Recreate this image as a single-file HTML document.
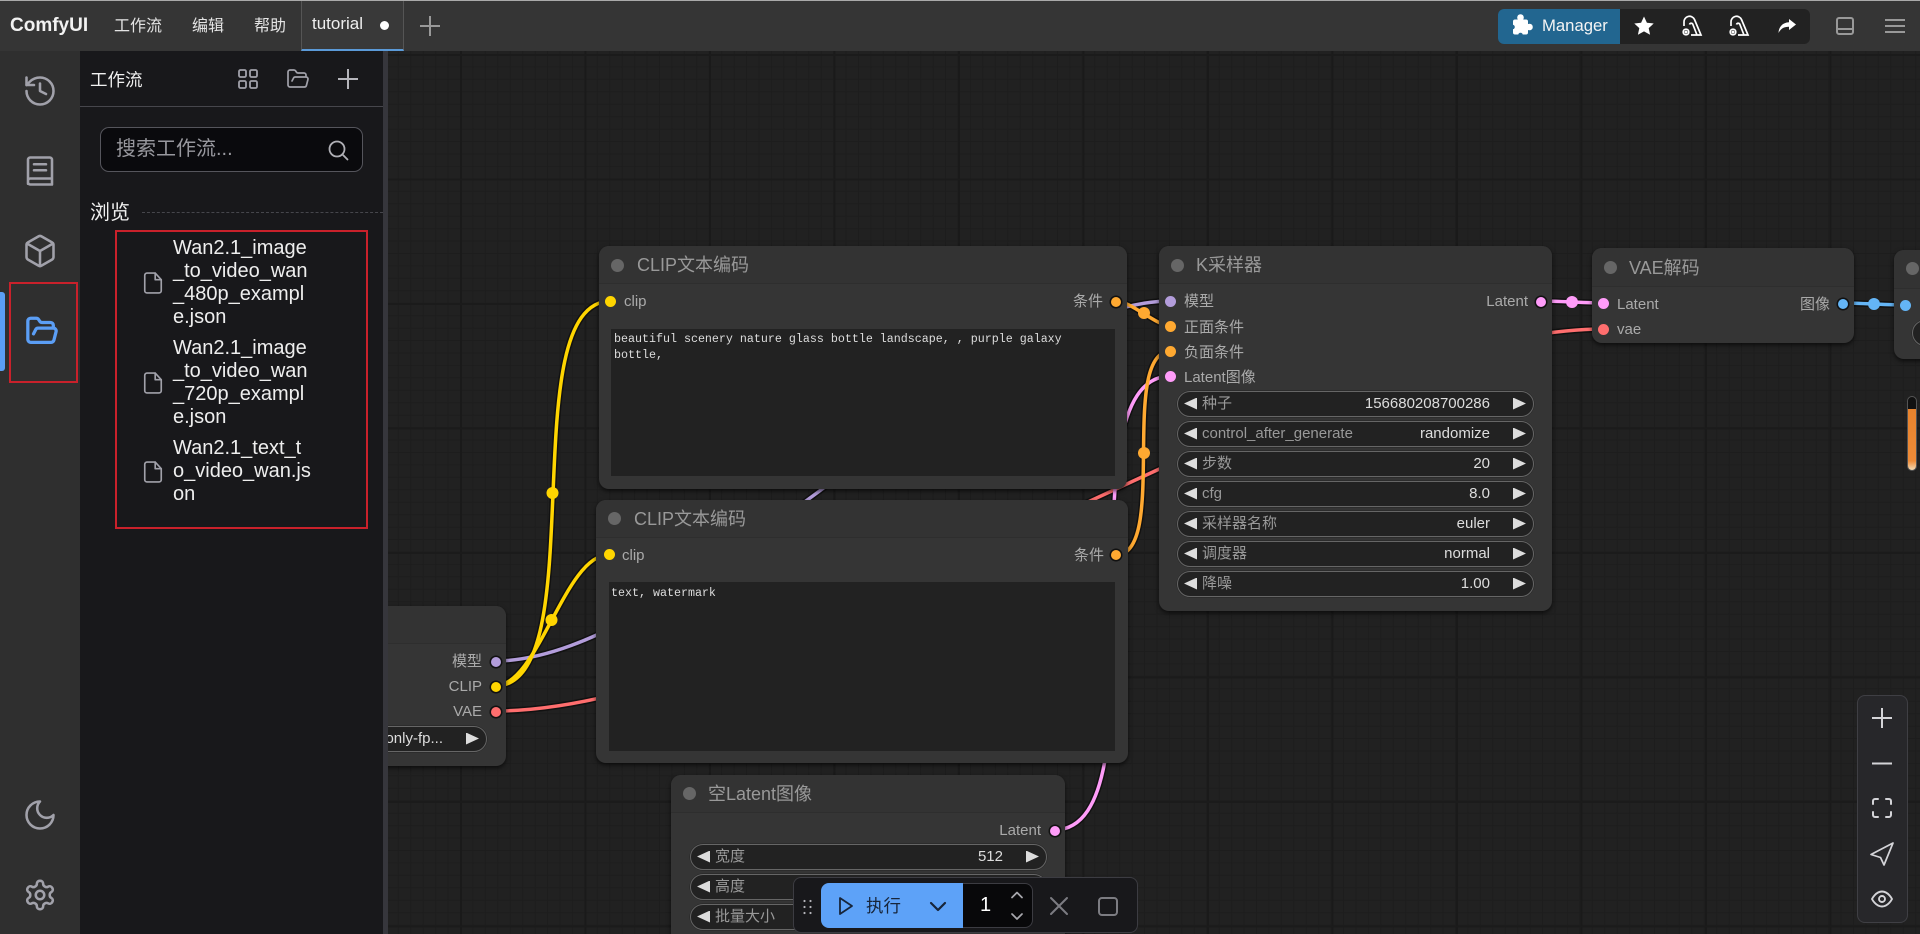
<!DOCTYPE html>
<html><head><meta charset="utf-8"><title>ComfyUI</title>
<style>
*{box-sizing:border-box}
html,body{margin:0;padding:0;width:1920px;height:934px;overflow:hidden;background:#212121}
body{position:relative;font-family:"Liberation Sans","Noto Sans CJK SC",sans-serif;color:#ddd}
.a{position:absolute}
.t{position:absolute;white-space:nowrap;height:20px;line-height:20px}
#canvas{position:absolute;left:388px;top:51px;width:1532px;height:883px;background-color:#212121;
background-image:linear-gradient(#1b1b1b 2px,transparent 2px),linear-gradient(90deg,#1a1a1a 2px,transparent 2px),linear-gradient(#1d1d1d 1px,transparent 1px),linear-gradient(90deg,#1d1d1d 1px,transparent 1px);
background-size:124.5px 124.5px,124.5px 124.5px,12.45px 12.45px,12.45px 12.45px;
background-position:72px 3px,72px 3px,72px 3px,72px 3px}
.node{position:absolute;background:#353535;border-radius:10px;box-shadow:0 2px 5px rgba(0,0,0,.65)}
.hd{position:absolute;left:0;right:0;top:0;background:#333;border-radius:10px 10px 0 0;border-bottom:1px solid #2e2e2e}
.tdot{position:absolute;width:13px;height:13px;border-radius:50%;background:#666}
.tt{position:absolute;white-space:nowrap;font-size:18px;color:#999;height:24px;line-height:24px}
.s{position:absolute;width:10px;height:10px;border-radius:50%;box-shadow:0 0 0 1.5px #111;margin:.5px}
.s2{width:11px;height:11px;box-shadow:none;margin:0}
.lb{position:absolute;white-space:nowrap;font-size:15px;color:#aaa;height:20px;line-height:20px}
.ta{position:absolute;background:#222;color:#ddd;font:11.67px/15.5px "Liberation Mono","Noto Sans CJK SC",monospace;padding:3px;white-space:pre}
.w{position:absolute;height:26px;background:#222;border:1.7px solid #666;border-radius:13px;box-shadow:0 0 0 .5px #222;font-size:15px}
.w .k{position:absolute;left:24px;top:2px;line-height:20px;color:#999;white-space:nowrap}
.w .v{position:absolute;right:43px;top:2px;line-height:20px;color:#ddd;white-space:nowrap}
.w .l,.w .r{position:absolute;top:5.5px;width:13px;height:12px;background:#ddd}
.w .l{left:6px;clip-path:polygon(0 50%,100% 0,100% 100%)}
.w .r{right:7px;clip-path:polygon(0 0,100% 50%,0 100%)}
svg{position:absolute;overflow:visible}
.ic{fill:none;stroke:#a1a1aa;stroke-width:1.7;stroke-linecap:round;stroke-linejoin:round}
.file{position:absolute;left:173px;font-size:20px;line-height:23px;color:#eee;white-space:pre}
</style></head>
<body>
<div id="canvas"></div>

<!-- wires -->
<svg style="left:0;top:0" width="1920" height="934" fill="none" stroke-linecap="round">
<g stroke="#111" stroke-width="6.5">
<path d="M495 661C686 661 980 301 1171 301"/>
<path d="M495 711C788 711 1311 329 1604 329"/>
<path d="M1054 830C1171 830 1054 376 1171 376"/>
<path d="M495 686C595 686 511 301 611 301"/>
<path d="M495 686C538 686 565 555 608 555"/>
<path d="M1116 301C1131 301 1156 326 1171 326"/>
<path d="M1116 555C1169 555 1118 351 1171 351"/>
<path d="M1541 301C1556 301 1589 303 1604 303"/>
<path d="M1842 303C1858 303 1890 305 1906 305"/>
</g>
<path d="M495 661C686 661 980 301 1171 301" stroke="#b39ddb" stroke-width="3.5"/>
<path d="M495 711C788 711 1311 329 1604 329" stroke="#ff6e6e" stroke-width="3.5"/>
<path d="M1054 830C1171 830 1054 376 1171 376" stroke="#ff9cf9" stroke-width="3.5"/>
<path d="M495 686C595 686 511 301 611 301" stroke="#ffd500" stroke-width="3.5"/>
<path d="M495 686C538 686 565 555 608 555" stroke="#ffd500" stroke-width="3.5"/>
<path d="M1116 301C1131 301 1156 326 1171 326" stroke="#ffa931" stroke-width="3.5"/>
<path d="M1116 555C1169 555 1118 351 1171 351" stroke="#ffa931" stroke-width="3.5"/>
<path d="M1541 301C1556 301 1589 303 1604 303" stroke="#ff9cf9" stroke-width="3.5"/>
<path d="M1842 303C1858 303 1890 305 1906 305" stroke="#64b5f6" stroke-width="3.5"/>
<circle cx="552.5" cy="493" r="6" fill="#ffd500"/>
<circle cx="551.5" cy="620" r="6" fill="#ffd500"/>
<circle cx="1144" cy="313" r="6" fill="#ffa931"/>
<circle cx="1144" cy="453" r="6" fill="#ffa931"/>
<circle cx="1572" cy="302" r="6" fill="#ff9cf9"/>
<circle cx="1874" cy="304" r="6" fill="#64b5f6"/>
</svg>

<!-- left loader node -->
<div class="node" style="left:300px;top:606px;width:206px;height:160px">
<div class="hd" style="height:38px"></div>
<div class="lb" style="right:24px;top:46px">模型</div><div class="s" style="left:190px;top:50px;background:#b39ddb"></div>
<div class="lb" style="right:24px;top:71px">CLIP</div><div class="s" style="left:190px;top:75px;background:#ffd500"></div>
<div class="lb" style="right:24px;top:96px">VAE</div><div class="s" style="left:190px;top:100px;background:#ff6e6e"></div>
<div class="w" style="left:-10px;top:120px;width:197px"><span class="v">only-fp...</span><i class="r"></i></div>
</div>

<!-- CLIP 1 -->
<div class="node" style="left:599px;top:246px;width:528px;height:243px">
<div class="hd" style="height:38px"></div>
<div class="tdot" style="left:12px;top:13px"></div>
<div class="tt" style="left:38px;top:7px">CLIP文本编码</div>
<div class="s s2" style="left:6px;top:50px;background:#ffd500"></div>
<div class="lb" style="left:25px;top:46px">clip</div>
<div class="lb" style="right:24px;top:46px">条件</div>
<div class="s" style="left:511px;top:50px;background:#ffa931"></div>
<div class="ta" style="left:12px;top:83px;width:504px;height:147px">beautiful scenery nature glass bottle landscape, , purple galaxy
bottle,</div>
</div>

<!-- CLIP 2 -->
<div class="node" style="left:596px;top:500px;width:532px;height:263px">
<div class="hd" style="height:38px"></div>
<div class="tdot" style="left:12px;top:12px"></div>
<div class="tt" style="left:38px;top:7px">CLIP文本编码</div>
<div class="s s2" style="left:8px;top:49px;background:#ffd500"></div>
<div class="lb" style="left:26px;top:46px">clip</div>
<div class="lb" style="right:24px;top:46px">条件</div>
<div class="s" style="left:514px;top:49px;background:#ffa931"></div>
<div class="ta" style="left:13px;top:82px;width:506px;height:169px;padding:4px 2px">text, watermark</div>
</div>

<!-- K sampler -->
<div class="node" style="left:1159px;top:246px;width:393px;height:365px">
<div class="hd" style="height:38px"></div>
<div class="tdot" style="left:12px;top:13px"></div>
<div class="tt" style="left:37px;top:7px">K采样器</div>
<div class="s s2" style="left:6px;top:50px;background:#b39ddb"></div><div class="lb" style="left:25px;top:46px">模型</div>
<div class="s s2" style="left:6px;top:75px;background:#ffa931"></div><div class="lb" style="left:25px;top:72px">正面条件</div>
<div class="s s2" style="left:6px;top:100px;background:#ffa931"></div><div class="lb" style="left:25px;top:97px">负面条件</div>
<div class="s s2" style="left:6px;top:125px;background:#ff9cf9"></div><div class="lb" style="left:25px;top:122px">Latent图像</div>
<div class="lb" style="right:24px;top:46px">Latent</div><div class="s" style="left:376px;top:50px;background:#ff9cf9"></div>
<div class="w" style="left:18px;top:145px;width:357px"><i class="l"></i><span class="k">种子</span><span class="v">156680208700286</span><i class="r"></i></div>
<div class="w" style="left:18px;top:175px;width:357px"><i class="l"></i><span class="k">control_after_generate</span><span class="v">randomize</span><i class="r"></i></div>
<div class="w" style="left:18px;top:205px;width:357px"><i class="l"></i><span class="k">步数</span><span class="v">20</span><i class="r"></i></div>
<div class="w" style="left:18px;top:235px;width:357px"><i class="l"></i><span class="k">cfg</span><span class="v">8.0</span><i class="r"></i></div>
<div class="w" style="left:18px;top:265px;width:357px"><i class="l"></i><span class="k">采样器名称</span><span class="v">euler</span><i class="r"></i></div>
<div class="w" style="left:18px;top:295px;width:357px"><i class="l"></i><span class="k">调度器</span><span class="v">normal</span><i class="r"></i></div>
<div class="w" style="left:18px;top:325px;width:357px"><i class="l"></i><span class="k">降噪</span><span class="v">1.00</span><i class="r"></i></div>
</div>

<!-- VAE decode -->
<div class="node" style="left:1592px;top:248px;width:262px;height:95px">
<div class="hd" style="height:39px"></div>
<div class="tdot" style="left:12px;top:13px"></div>
<div class="tt" style="left:37px;top:8px">VAE解码</div>
<div class="s s2" style="left:6px;top:50px;background:#ff9cf9"></div><div class="lb" style="left:25px;top:47px">Latent</div>
<div class="s s2" style="left:6px;top:76px;background:#ff6e6e"></div><div class="lb" style="left:25px;top:72px">vae</div>
<div class="lb" style="right:24px;top:47px">图像</div><div class="s" style="left:245px;top:50px;background:#64b5f6"></div>
</div>

<!-- Save image node (cut off) -->
<div class="node" style="left:1894px;top:250px;width:60px;height:109px">
<div class="hd" style="height:39px"></div>
<div class="tdot" style="left:12px;top:12px"></div>
<div class="s s2" style="left:6px;top:50px;background:#64b5f6"></div>
<div class="w" style="left:18px;top:70px;width:40px"></div>
</div>
<div class="a" style="left:1907px;top:396px;width:10px;height:75px;border-radius:5px;background:#111;border:1px solid #555"></div>
<div class="a" style="left:1908px;top:409px;width:8px;height:61px;border-radius:0 0 4px 4px;background:linear-gradient(#e8832d 0,#ee8b38 85%,#f3dcb8 100%)"></div>

<!-- Empty latent -->
<div class="node" style="left:671px;top:775px;width:394px;height:170px">
<div class="hd" style="height:38px"></div>
<div class="tdot" style="left:12px;top:12px"></div>
<div class="tt" style="left:37px;top:7px">空Latent图像</div>
<div class="lb" style="right:24px;top:46px">Latent</div><div class="s" style="left:378px;top:50px;background:#ff9cf9"></div>
<div class="w" style="left:19px;top:69px;width:357px"><i class="l"></i><span class="k">宽度</span><span class="v">512</span><i class="r"></i></div>
<div class="w" style="left:19px;top:99px;width:357px"><i class="l"></i><span class="k">高度</span></div>
<div class="w" style="left:19px;top:129px;width:357px"><i class="l"></i><span class="k">批量大小</span></div>
</div>

<!-- top bar -->
<div class="a" style="left:0;top:0;width:1920px;height:51px;background:#353535"></div>
<div class="a" style="left:0;top:0;width:1920px;height:1px;background:#aaa"></div>
<div class="t" style="left:10px;top:16px;font-size:19px;font-weight:bold;color:#f2f2f2">ComfyUI</div>
<div class="t" style="left:114px;top:17px;font-size:16px;color:#e4e4e4">工作流</div>
<div class="t" style="left:192px;top:17px;font-size:16px;color:#e4e4e4">编辑</div>
<div class="t" style="left:254px;top:17px;font-size:16px;color:#e4e4e4">帮助</div>
<div class="a" style="left:301px;top:1px;width:103px;height:50px;background:#393939;border-left:1px solid #555;border-right:1px solid #555;border-bottom:2px solid #5b9ad8"></div>
<div class="t" style="left:312px;top:14px;font-size:17px;color:#eee">tutorial</div>
<div class="a" style="left:380px;top:21px;width:9px;height:9px;border-radius:50%;background:#fff"></div>
<svg style="left:420px;top:16px" width="20" height="20" fill="none" stroke="#999" stroke-width="2"><path d="M10 0v20M0 10h20"/></svg>

<div class="a" style="left:1498px;top:9px;width:312px;height:35px;background:#222;border-radius:6px"></div>
<div class="a" style="left:1498px;top:9px;width:122px;height:35px;background:#226690;border-radius:6px 0 0 6px"></div>
<svg style="left:1512px;top:14px" width="21" height="21" viewBox="0 0 21 21" fill="#fff"><rect x="1" y="5.500" width="15" height="15" rx="2"/><circle cx="8.500" cy="3.500" r="3.300"/><circle cx="17.500" cy="13" r="3.300"/><circle cx="0.500" cy="13" r="2.300" fill="#226690"/><circle cx="8.500" cy="21" r="2.300" fill="#226690"/></svg>
<div class="t" style="left:1542px;top:16px;font-size:16.7px;color:#f4f4f4">Manager</div>
<svg style="left:1634px;top:16px" width="20" height="20" viewBox="0 0 20 20"><path fill="#fff" d="M10 .5l2.900 6.200 6.800.8-5 4.600 1.400 6.700L10 15.400l-6.100 3.400 1.400-6.700-5-4.600 6.800-.8z"/></svg>
<svg style="left:1682px;top:15px" width="21" height="21" viewBox="0 0 21 21" fill="none" stroke="#fff" stroke-width="1.700"><path d="M2 11V7a5.500 5.500 0 0 1 10.500-2.500L19 20H9"/><path d="M7.500 9.500a1.800 1.800 0 0 1 3.200-.5L15 20"/><circle cx="4" cy="17" r="2.800"/><circle cx="4" cy="17" r=".7" fill="#fff"/></svg>
<svg style="left:1729px;top:15px" width="21" height="21" viewBox="0 0 21 21" fill="none" stroke="#fff" stroke-width="1.700"><path d="M2 11V7a5.500 5.500 0 0 1 10.500-2.500L19 20H9"/><path d="M7.500 9.500a1.800 1.800 0 0 1 3.200-.5L15 20"/><circle cx="4" cy="17" r="2.800"/><circle cx="4" cy="17" r=".7" fill="#fff"/></svg>
<svg style="left:1778px;top:19px" width="18" height="14" viewBox="0 0 18 14"><path fill="#fff" d="M11 0l7 5.500-7 5.500V7.800C6 7.800 3 9.500 .5 14 .8 8 4.500 3.600 11 3.300z"/></svg>
<svg style="left:1836px;top:17px" width="18" height="18" fill="none" stroke="#999" stroke-width="2"><rect x="1" y="1" width="16" height="16" rx="2"/><path d="M1 12h16"/></svg>
<svg style="left:1885px;top:19px" width="20" height="14" fill="none" stroke="#999" stroke-width="2"><path d="M0 1h20M0 7h20M0 13h20"/></svg>

<!-- icon strip -->
<div class="a" style="left:0;top:51px;width:80px;height:883px;background:#2f2f2f"></div>
<svg class="ic" style="left:22px;top:73px" width="36" height="36" viewBox="0 0 24 24"><path d="M3 12a9 9 0 1 0 9-9 9.750 9.750 0 0 0-6.740 2.740L3 8"/><path d="M3 3v5h5"/><path d="M12 7v5l4 2"/></svg>
<svg class="ic" style="left:22px;top:153px" width="36" height="36" viewBox="0 0 24 24"><path d="M4 20.500V4.500A1.500 1.500 0 0 1 5.500 3h13A1.500 1.500 0 0 1 20 4.500v16.500H5.500A1.500 1.500 0 0 1 4 19.500V18.500A1.500 1.500 0 0 1 5.500 17H20"/><path d="M8 7.500h8M8 11.500h8"/></svg>
<svg class="ic" style="left:22px;top:233px" width="36" height="36" viewBox="0 0 24 24"><path d="M21 8a2 2 0 0 0-1-1.730l-7-4a2 2 0 0 0-2 0l-7 4A2 2 0 0 0 3 8v8a2 2 0 0 0 1 1.730l7 4a2 2 0 0 0 2 0l7-4A2 2 0 0 0 21 16Z"/><path d="m3.300 7 8.700 5 8.700-5"/><path d="M12 22V12"/></svg>
<div class="a" style="left:0;top:292px;width:5px;height:79px;background:#5b9ef5;border-radius:0 3px 3px 0"></div>
<svg class="ic" style="left:25px;top:314px;stroke:#5b9ef5;stroke-width:2.300" width="34" height="34" viewBox="0 0 24 24"><path d="m6 14 1.500-2.900A2 2 0 0 1 9.240 10H20a2 2 0 0 1 1.940 2.500l-1.540 6a2 2 0 0 1-1.950 1.500H4a2 2 0 0 1-2-2V5a2 2 0 0 1 2-2h3.900a2 2 0 0 1 1.690.9l.81 1.200a2 2 0 0 0 1.670.9H18a2 2 0 0 1 2 2v2"/></svg>
<svg class="ic" style="left:22px;top:797px" width="36" height="36" viewBox="0 0 24 24"><path d="M12 3a6 6 0 0 0 9 9 9 9 0 1 1-9-9Z"/></svg>
<svg class="ic" style="left:23px;top:878px;stroke-width:1.800" width="34" height="34" viewBox="0 0 24 24"><path d="M12.220 2h-.44a2 2 0 0 0-2 2v.18a2 2 0 0 1-1 1.730l-.43.25a2 2 0 0 1-2 0l-.15-.08a2 2 0 0 0-2.730.73l-.22.38a2 2 0 0 0 .73 2.730l.15.1a2 2 0 0 1 1 1.720v.51a2 2 0 0 1-1 1.740l-.15.09a2 2 0 0 0-.73 2.730l.22.38a2 2 0 0 0 2.730.73l.15-.08a2 2 0 0 1 2 0l.43.25a2 2 0 0 1 1 1.730V20a2 2 0 0 0 2 2h.44a2 2 0 0 0 2-2v-.18a2 2 0 0 1 1-1.730l.43-.25a2 2 0 0 1 2 0l.15.08a2 2 0 0 0 2.730-.73l.22-.39a2 2 0 0 0-.73-2.730l-.15-.08a2 2 0 0 1-1-1.740v-.5a2 2 0 0 1 1-1.740l.15-.09a2 2 0 0 0 .73-2.730l-.22-.38a2 2 0 0 0-2.730-.73l-.15.08a2 2 0 0 1-2 0l-.43-.25a2 2 0 0 1-1-1.730V4a2 2 0 0 0-2-2z"/><circle cx="12" cy="12" r="3"/></svg>

<!-- side panel -->
<div class="a" style="left:80px;top:51px;width:303px;height:883px;background:#18181b"></div>
<div class="a" style="left:383px;top:51px;width:5px;height:883px;background:#36363c"></div>
<div class="t" style="left:90px;top:70px;font-size:17.500px;color:#f0f0f0">工作流</div>
<div class="a" style="left:80px;top:106px;width:303px;height:1px;background:#46464c"></div>
<svg style="left:238px;top:69px" width="20" height="20" fill="none" stroke="#a1a1aa" stroke-width="1.800"><rect x="1" y="1" width="7" height="7" rx="1.500"/><rect x="12" y="1" width="7" height="7" rx="1.500"/><rect x="1" y="12" width="7" height="7" rx="1.500"/><rect x="12" y="12" width="7" height="7" rx="1.500"/></svg>
<svg class="ic" style="left:286px;top:67px;stroke-width:1.700" width="24" height="24" viewBox="0 0 24 24"><path d="m6 14 1.500-2.900A2 2 0 0 1 9.240 10H20a2 2 0 0 1 1.940 2.500l-1.540 6a2 2 0 0 1-1.950 1.500H4a2 2 0 0 1-2-2V5a2 2 0 0 1 2-2h3.900a2 2 0 0 1 1.690.9l.81 1.200a2 2 0 0 0 1.670.9H18a2 2 0 0 1 2 2v2"/></svg>
<svg style="left:338px;top:69px" width="20" height="20" fill="none" stroke="#b5b5bb" stroke-width="2"><path d="M10 0v20M0 10h20"/></svg>

<div class="a" style="left:100px;top:127px;width:263px;height:45px;background:#0a0a0d;border:1px solid #55555c;border-radius:9px"></div>
<div class="t" style="left:116px;top:139px;font-size:20px;color:#98989e">搜索工作流...</div>
<svg style="left:328px;top:140px" width="20" height="20" fill="none" stroke="#b0b0b6" stroke-width="1.800" stroke-linecap="round"><circle cx="9" cy="9" r="7.500"/><path d="M14.500 14.500l5 5"/></svg>

<div class="t" style="left:90px;top:203px;font-size:20px;color:#f0f0f0">浏览</div>
<div class="a" style="left:142px;top:212px;width:241px;border-top:1px dashed #46464c"></div>

<div class="file" style="top:237px">Wan2.1_image
_to_video_wan
_480p_exampl
e.json</div>
<div class="file" style="top:337px">Wan2.1_image
_to_video_wan
_720p_exampl
e.json</div>
<div class="file" style="top:437px">Wan2.1_text_t
o_video_wan.js
on</div>
<svg class="ic" style="left:143px;top:272px;stroke-width:1.500" width="20" height="22" viewBox="0 0 18 20"><path d="M11 1H3.500A2 2 0 0 0 1.500 3v14a2 2 0 0 0 2 2h11a2 2 0 0 0 2-2V7z"/><path d="M11 1v6h5.500"/></svg>
<svg class="ic" style="left:143px;top:372px;stroke-width:1.500" width="20" height="22" viewBox="0 0 18 20"><path d="M11 1H3.500A2 2 0 0 0 1.500 3v14a2 2 0 0 0 2 2h11a2 2 0 0 0 2-2V7z"/><path d="M11 1v6h5.500"/></svg>
<svg class="ic" style="left:143px;top:461px;stroke-width:1.500" width="20" height="22" viewBox="0 0 18 20"><path d="M11 1H3.500A2 2 0 0 0 1.500 3v14a2 2 0 0 0 2 2h11a2 2 0 0 0 2-2V7z"/><path d="M11 1v6h5.500"/></svg>

<!-- red highlight boxes -->
<div class="a" style="left:115px;top:230px;width:253px;height:299px;border:2px solid #c9212b"></div>
<div class="a" style="left:9px;top:282px;width:69px;height:101px;border:2px solid #c9212b"></div>

<!-- run bar -->
<div class="a" style="left:793px;top:877px;width:345px;height:56px;background:#18181b;border:1px solid #3c3c42;border-radius:8px"></div>
<svg style="left:803px;top:899px" width="9" height="17" fill="#b5b5bb"><circle cx="1.500" cy="2" r="1.100"/><circle cx="7.500" cy="2" r="1.100"/><circle cx="1.500" cy="8" r="1.100"/><circle cx="7.500" cy="8" r="1.100"/><circle cx="1.500" cy="14" r="1.100"/><circle cx="7.500" cy="14" r="1.100"/></svg>
<div class="a" style="left:821px;top:883px;width:142px;height:45px;background:#5da2f8;border-radius:8px 0 0 8px"></div>
<svg style="left:839px;top:897px" width="14" height="18" fill="none" stroke="#17253a" stroke-width="1.800" stroke-linejoin="round"><path d="M1 1l12 8L1 17z"/></svg>
<div class="t" style="left:866px;top:896px;font-size:17.500px;color:#17253a">执行</div>
<svg style="left:930px;top:902px" width="16" height="10" fill="none" stroke="#17253a" stroke-width="2.200" stroke-linecap="round" stroke-linejoin="round"><path d="M1 1l7 7 7-7"/></svg>
<div class="a" style="left:963px;top:883px;width:70px;height:45px;background:#08080a;border:1px solid #3c3c42;border-left:none;border-radius:0 8px 8px 0"></div>
<div class="t" style="left:980px;top:895px;font-size:20px;color:#fff">1</div>
<svg style="left:1011px;top:891px" width="12" height="30" fill="none" stroke="#a8a8ae" stroke-width="1.700" stroke-linecap="round" stroke-linejoin="round"><path d="M1 6.500l5-5 5 5M1 23l5 5 5-5"/></svg>
<svg style="left:1050px;top:897px" width="18" height="18" fill="none" stroke="#7c7c82" stroke-width="2" stroke-linecap="round"><path d="M1 1l16 16M17 1L1 17"/></svg>
<svg style="left:1098px;top:897px" width="20" height="19" fill="none" stroke="#7c7c82" stroke-width="2"><rect x="1" y="1" width="18" height="17" rx="3"/></svg>

<!-- canvas controls -->
<div class="a" style="left:1857px;top:695px;width:51px;height:228px;background:#27272a;border:1px solid #3f3f44;border-radius:8px"></div>
<svg style="left:1872px;top:708px" width="20" height="20" fill="none" stroke="#d4d4d8" stroke-width="2"><path d="M10 0v20M0 10h20"/></svg>
<svg style="left:1872px;top:762px" width="20" height="3" fill="none" stroke="#d4d4d8" stroke-width="2"><path d="M0 1.500h20"/></svg>
<svg style="left:1872px;top:798px" width="20" height="20" fill="none" stroke="#d4d4d8" stroke-width="2" stroke-linecap="round" stroke-linejoin="round"><path d="M1 6V3a2 2 0 0 1 2-2h3M14 1h3a2 2 0 0 1 2 2v3M19 14v3a2 2 0 0 1-2 2h-3M6 19H3a2 2 0 0 1-2-2v-3"/></svg>
<svg style="left:1870px;top:842px" width="24" height="24" fill="none" stroke="#d4d4d8" stroke-width="1.700" stroke-linejoin="round"><path d="M1 12.500L23 1 14 23l-3.500-7.500z"/></svg>
<svg style="left:1871px;top:889px" width="22" height="20" viewBox="0 0 22 20" fill="none" stroke="#d4d4d8" stroke-width="1.900"><path d="M1 10s3.700-7.500 10-7.500S21 10 21 10s-3.700 7.500-10 7.500S1 10 1 10z"/><circle cx="11" cy="10" r="3"/></svg>
</body></html>
